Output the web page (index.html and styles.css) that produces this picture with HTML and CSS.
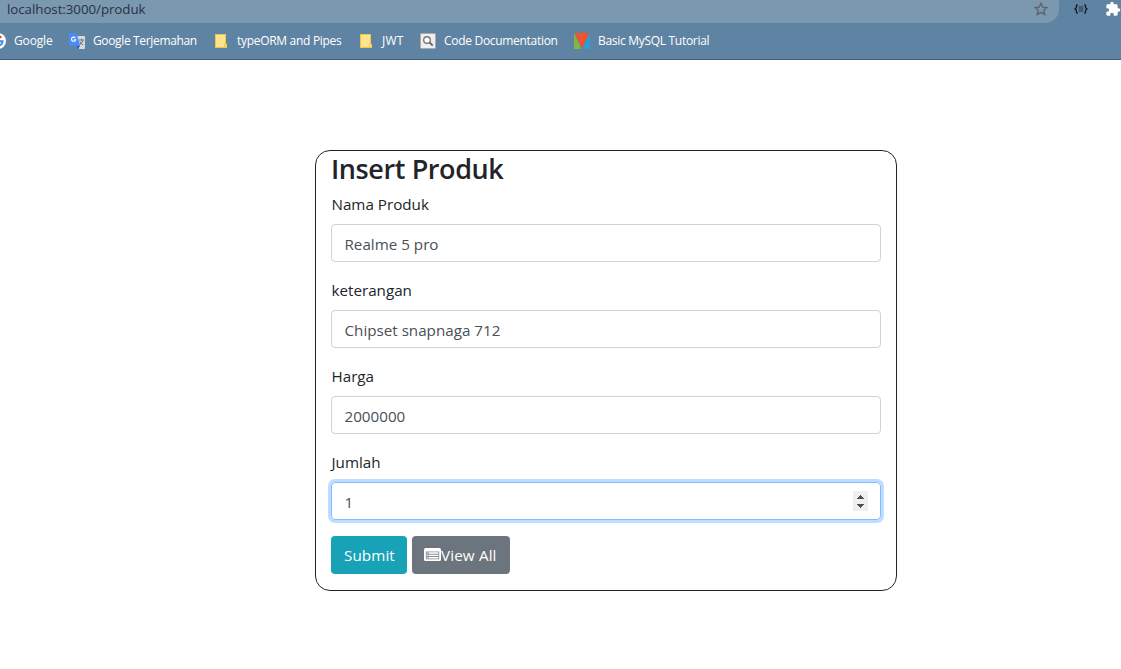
FILE: index.html
```html
<!DOCTYPE html>
<html lang="id">
<head>
<meta charset="utf-8">
<title>Insert Produk</title>
<link rel="stylesheet" href="styles.css">
</head>
<body>
<header class="browser">
  <div class="toolbar">
    <div class="address">
      <span class="url">localhost:3000/produk</span>
      <svg class="star" width="14" height="14" viewBox="0 0 14 14"><path d="M7 1.2 8.7 5.1 13 5.5 9.8 8.3 10.7 12.5 7 10.3 3.3 12.5 4.2 8.3 1 5.5 5.3 5.1Z" fill="none" stroke="#5f6368" stroke-width="1.4"/></svg>
    </div>
    <svg class="braces" width="14" height="10" viewBox="0 0 14 10"><path d="M3.8 1H3.2Q2.4 1 2.4 2V3.8L1 5 2.4 6.2V8Q2.4 9 3.2 9H3.8M10.2 1h.6q.8 0 .8 1V3.8L13 5 11.6 6.2V8q0 1-.8 1H10.2" fill="none" stroke="#101a24" stroke-width="1.3"/><path d="M4.6 3h4.8M4.6 5h4.8M4.6 7h4.8" stroke="#26323e" stroke-width="1.1"/></svg>
    <svg class="puzzle" width="16" height="16" viewBox="0 0 24 24"><path fill="#fff" d="M20.5 11H19V7a2 2 0 0 0-2-2h-4V3.5a2.5 2.5 0 0 0-5 0V5H4a2 2 0 0 0-2 2v3.8h1.5a2.7 2.7 0 0 1 0 5.4H2V20a2 2 0 0 0 2 2h3.8v-1.5a2.7 2.7 0 0 1 5.4 0V22H17a2 2 0 0 0 2-2v-4h1.5a2.5 2.5 0 0 0 0-5z"/></svg>
  </div>
  <nav class="bookmarks">
    <a class="mark m-google"><svg width="16" height="16" viewBox="0 0 16 16"><circle cx="8" cy="8" r="8" fill="#fff"/><g fill="none" stroke-width="2"><path d="M4.1 5.4A4.6 4.6 0 0 1 11.3 4.7" stroke="#ea4335"/><path d="M4.1 5.4a4.6 4.6 0 0 0 0 5.2" stroke="#fbbc05"/><path d="M4.1 10.6A4.6 4.6 0 0 0 11 11.5" stroke="#34a853"/><path d="M8 8.2h4.6Q12.5 10.3 11 11.5" stroke="#4285f4"/></g></svg><span>Google</span></a>
    <a class="mark m-translate"><svg width="16" height="16" viewBox="0 0 16 16"><path d="M7 3h8.2q.8 0 .8.8v11.4q0 .8-.8.8H10Z" fill="#d5d8dc"/><path d="M10 7h5M12.5 5.8V7M14 7q-.7 3-3.5 5M10.8 8.5q1.2 2.5 3.4 3.4" fill="none" stroke="#667481"/><path d="M.8 0h6.7l3.7 12.7H.8Q0 12.7 0 12V.8Q0 0 .8 0Z" fill="#4c8bf5"/><path d="M7.5 12.7h3.7L9 16Z" fill="#3559b5"/><path d="M6.3 5A2.1 2.1 0 1 0 6.6 6.8H4.8" fill="none" stroke="#fff" stroke-width="1.1"/></svg><span>Google Terjemahan</span></a>
    <a class="mark m-orm"><svg width="12" height="14" viewBox="0 0 12 14"><path d="M0 0h11v9.5h1V14H0Z" fill="#ebc848"/><path d="M1 1h9v8.5H9V13H1Z" fill="#ffe48d"/><path d="M10 10.5h1V13h-1Z" fill="#ffe48d"/></svg><span>typeORM and Pipes</span></a>
    <a class="mark m-jwt"><svg width="12" height="14" viewBox="0 0 12 14"><path d="M0 0h11v9.5h1V14H0Z" fill="#ebc848"/><path d="M1 1h9v8.5H9V13H1Z" fill="#ffe48d"/><path d="M10 10.5h1V13h-1Z" fill="#ffe48d"/></svg><span>JWT</span></a>
    <a class="mark m-code"><svg width="16" height="16" viewBox="0 0 16 16"><rect x=".5" y=".5" width="15" height="15" rx="1" fill="#eee" stroke="#aaa"/><circle cx="7" cy="7" r="3.3" fill="#fff" stroke="#777" stroke-width="1.4"/><path d="m9.5 9.5 3.2 3" stroke="#666" stroke-width="1.8"/></svg><span>Code Documentation</span></a>
    <a class="mark m-mysql"><svg width="16" height="16" viewBox="0 0 16 16"><path d="M0 0 8 16H0Z" fill="#7eb842"/><path d="M16 0v16H8Z" fill="#2f9bd7"/><path d="M6 12h4L9 16H7Z" fill="#5f84a3"/><path d="M.8 0h14.4L8.6 14H7.4Z" fill="#f0532d"/></svg><span>Basic MySQL Tutorial</span></a>
  </nav>
</header>
<main class="page">
  <form class="card">
    <h3 class="title">Insert Produk</h3>
    <div class="group"><label class="label">Nama Produk</label><div class="control">Realme 5 pro</div></div>
    <div class="group"><label class="label">keterangan</label><div class="control">Chipset snapnaga 712</div></div>
    <div class="group"><label class="label">Harga</label><div class="control">2000000</div></div>
    <div class="group"><label class="label">Jumlah</label><div class="control focused">1<span class="spinner"><svg width="15" height="20" viewBox="0 0 15 20"><path d="M7 4h1v1h1v1h1v1h1v1H4V7h1V6h1V5h1ZM4 13h7v1h-1v1H9v1H8v1H7v-1H6v-1H5v-1H4Z" fill="#505050"/></svg></span></div></div>
    <div class="actions">
      <button type="button" class="btn submit">Submit</button>
      <button type="button" class="btn view"><svg width="17" height="13" viewBox="0 0 17 13"><rect width="17" height="13" rx="1.5" fill="#fff"/><rect x="1.8" y="3.5" width="13.4" height="7.8" fill="#8b9096"/><path d="M4.6 5h9.8M4.6 7.4h9.8M4.6 9.8h9.8" stroke="#fff" stroke-width="1.4"/><path d="M2.5 5h1.2M2.5 7.4h1.2M2.5 9.8h1.2" stroke="#fff" stroke-width="1.2"/></svg><span>View All</span></button>
    </div>
  </form>
</main>
</body>
</html>
```
FILE: styles.css
```css
* { box-sizing: border-box; }
body { margin: 0; background: #fff; color: #212529; font-family: "Open Sans", "Noto Sans", sans-serif; font-size: 15.2px; line-height: 24px; overflow: hidden; }
svg { display: block; flex: none; }
.browser { height: 60px; background: #5f84a3; border-bottom: 1px solid #3f5f7b; }
.toolbar { display: flex; height: 23px; }
.address { width: 1059px; height: 23px; background: #7b98b1; border-bottom-right-radius: 14px; display: flex; padding: 0 11px 0 7px; justify-content: space-between; }
.url { font-size: 13.3px; line-height: 19px; letter-spacing: -.04px; color: #273341; }
.star { margin-top: 2px; }
.braces { margin: 4px 0 0 15px; }
.puzzle { margin: 1px 0 0 17px; }
.bookmarks { display: flex; height: 36px; color: #fff; font-size: 12px; line-height: 36px; letter-spacing: -.3px; white-space: nowrap; }
.mark { display: flex; align-items: center; flex: none; }
.m-google { width: 79px; margin-left: -10px; gap: 8px; letter-spacing: -.15px; }
.m-translate { width: 146px; gap: 8px; letter-spacing: -.35px; }
.m-orm { width: 145px; gap: 10px; }
.m-jwt { width: 60px; gap: 10px; letter-spacing: .2px; }
.m-code { width: 154px; gap: 8px; }
.m-mysql { gap: 8px; }
.page { padding: 90px 0 0 315px; }
.card { width: 582px; height: 441px; border: 1px solid #212529; border-radius: 15px; padding: 0 15px; }
.title { margin: 0 0 7px; font-size: 27px; line-height: 34px; font-weight: 600; letter-spacing: -.4px; padding-top: 1px; height: 34px; }
.group { margin-bottom: 16px; }
.label { display: block; height: 24px; margin-bottom: 8px; padding-left: .5px; }
.control { display: flex; align-items: center; justify-content: space-between; height: 38px; padding: 2px 12px 0 12.5px; border: 1px solid #ced4da; border-radius: 4px; color: #495057; }
.focused { border-color: #80bdff; box-shadow: 0 0 0 3px #bfdeff; }
.spinner { width: 15px; height: 20px; background: #efefef; margin: -2px 0 0; }
.actions { display: flex; gap: 5px; }
.btn { display: flex; align-items: center; height: 38px; border: 0; border-radius: 4px; padding: 0 0 0 13px; color: #fff; font: inherit; white-space: nowrap; }
.submit { width: 76px; background: #17a2b8; letter-spacing: .1px; }
.view { width: 98px; background: #6c757d; padding-left: 12px; letter-spacing: .15px; }
.view svg { margin-top: -1px; }
```
